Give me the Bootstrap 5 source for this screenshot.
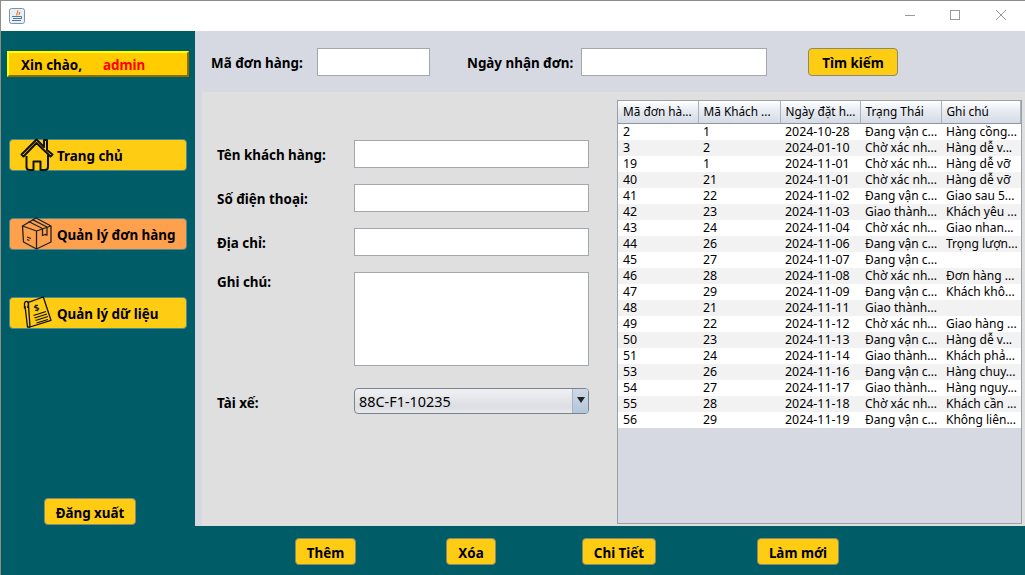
<!DOCTYPE html>
<html lang="vi">
<head>
<meta charset="UTF-8">
<title>Quản lý đơn hàng</title>
<link href="https://cdn.jsdelivr.net/npm/bootstrap@5.3.0/dist/css/bootstrap.min.css" rel="stylesheet">
<style>
  html, body { height: 100%; overflow: hidden; }
  body { background: #8d8d8d; font-family: "Noto Sans", sans-serif; font-size: 12px; color: #000; }
  .win-frame { width: 1024px; height: 574px; margin: 1px 0 0 1px; display: flex; flex-direction: column; background: #005c66; }
  .win-title { height: 30px; background: #fff; flex: none; padding: 0 8px; }
  .win-ctrl { width: 46px; }
  .win-ctrls { margin: -2px -7px 0 auto; }
  .win-body { height: 495px; flex: none; }
  .side-col { width: 194px; flex: none; padding: 20px 6px 1px 6px; }
  .hello-box { height: 26px; background: #ffcc00; border: 2px solid; border-color: #ffff00 #8a7000 #8a7000 #ffff00; padding: 2px 0 0 12px; font: bold 13.4px "Noto Sans", sans-serif; }
  .hello-name { color: #f00; margin-left: 21px; }
  .menu-stack { margin-top: 62px; padding: 0 2px; gap: 47px; }
  .menu-btn { height: 32px; background: #ffcc14; border: 1px solid #4e8a8f; border-radius: 4px; font: bold 13.4px "Noto Sans", sans-serif; padding: 2px 0 0 47px; position: relative; color: #000; }
  .menu-btn.is-active { background: #ffa04d; }
  .menu-ico { position: absolute; left: 10px; top: -2px; width: 34px; height: 36px; }
  .yellow-btn { background: #ffcc14; border: 1px solid #8b8a70; border-radius: 4px; font: bold 13.4px "Noto Sans", sans-serif; height: 27px; padding: 2px 0 0; color: #000; }
  .main-col { background: #d6d9e1; }
  .search-row { height: 61px; flex: none; padding: 17px 0 0 16px; }
  .bold-label { font: bold 13.4px "Noto Sans", sans-serif; }
  .flat-input { background: #fff; border: 1px solid #a3a8ae; display: block; }
  .search-label { line-height: 28px; height: 28px; padding-top: 1px; }
  .input-code { width: 113px; height: 28px; }
  .input-date { width: 186px; height: 28px; }
  .btn-search { width: 90px; height: 28px; margin-left: 41px; }
  .btn-logout { width: 92px; margin-left: 37px; }
  .work-area { margin-left: 7px; background: #dfdfdf; flex: 1; min-height: 0; padding: 8px 3px 3px 15px; }
  .form-col { width: 372px; flex: none; padding-top: 40px; }
  .form-line { display: flex; margin-bottom: 16px; }
  .form-line .bold-label { width: 137px; line-height: 28px; height: 28px; padding-top: 1px; flex: none; }
  .form-line .note-label { line-height: 18px; height: 18px; }
  .form-line .driver-label { line-height: 40px; height: 40px; }
  .field-input { width: 235px; height: 28px; }
  .field-note { width: 235px; height: 94px; resize: none; }
  .combo-box { width: 235px; height: 26px; margin-top: 6px; border: 1px solid #7a8490; border-radius: 4px; background: linear-gradient(#f0f1f3, #dcdee3 75%, #e8eaee); font-size: 14.4px; padding-left: 4px; line-height: 26px; position: relative; }
  .combo-arrow { position: absolute; right: 0; top: 0; bottom: 0; width: 16px; background: linear-gradient(#cfd9e4, #b3c6da); border-left: 1px solid #a9b4c0; border-radius: 0 3px 3px 0; }
  .combo-arrow::after { content: ""; position: absolute; left: 4px; top: 8px; border: 4px solid transparent; border-top: 6px solid #222; border-bottom: 0; }
  .table-box { margin-left: 28px; width: 405px; background: #d6d9e1; border: 1px solid #9aa0a6; height: 424px; overflow: hidden; }
  .order-table { table-layout: fixed; width: 403px; margin: 0; border-collapse: collapse; }
  .order-table th, .order-table td { padding: 0 0 0 5px; font-weight: 400; white-space: nowrap; overflow: hidden; border: 0; color: #000; font-size: 12px; }
  .order-table th { height: 22px; font-size: 11.8px; background: linear-gradient(#fff, #e9edf3 40%, #d5dae4); border-right: 1px solid #a9b1bd; border-bottom: 1px solid #8b95a3; }
  .order-table th:nth-child(1) { width: 80px; }
  .order-table th:nth-child(2) { width: 82px; }
  .order-table th:nth-child(3) { width: 80px; }
  .order-table th:nth-child(4) { width: 81px; }
  .order-table td { height: 16px; line-height: 16px; background: #fff; }
  .order-table td:nth-child(-n+3) { font-size: 12.4px; }
  .order-table tbody tr:nth-child(even) td { background: #f2f2f2; }
  .action-bar { height: 48px; flex: none; padding: 12px 0 0 294px; }
  .btn-them { width: 61px; margin-right: 90px; }
  .btn-xoa { width: 50px; margin-right: 86px; }
  .btn-chitiet { width: 74px; margin-right: 101px; }
  .btn-lammoi { width: 82px; }
</style>
</head>
<body>
<div class="win-frame">
  <div class="win-title d-flex align-items-center">
    <svg width="16" height="16" viewBox="0 0 16 16"><rect x=".5" y=".5" width="15" height="15" rx="2" fill="#e8eff6" stroke="#7d92a8"/><path d="M8.5 2.5c1.5 2-2 3-.5 5M10.500 4c.8 1-1 2-.2 3" fill="none" stroke="#e2762a" stroke-width="1.2"/><path d="M3 8.500h7M4 10.500h6M3 12.500h9M10 8.500h2.500v2H10" fill="none" stroke="#4f7aa6"/></svg>
    <div class="win-ctrls d-flex align-items-center">
      <div class="win-ctrl d-flex justify-content-center"><svg width="12" height="12"><path d="M2 6.500h10" stroke="#999"/></svg></div>
      <div class="win-ctrl d-flex justify-content-center"><svg width="12" height="12"><rect x="1.500" y="1.500" width="9" height="9" fill="none" stroke="#999"/></svg></div>
      <div class="win-ctrl d-flex justify-content-center"><svg width="12" height="12"><path d="M1 1l10 10M11 1L1 11" stroke="#999"/></svg></div>
    </div>
  </div>
  <div class="win-body d-flex">
    <div class="side-col d-flex flex-column">
      <div class="hello-box d-flex align-items-center"><span>Xin chào,</span><span class="hello-name">admin</span></div>
      <div class="menu-stack d-flex flex-column">
        <button class="menu-btn text-start">Trang chủ
          <svg class="menu-ico" viewBox="0 0 34 36" fill="none" stroke="#111" stroke-width="2" stroke-linejoin="round"><path d="M1.500 16.500L16.500 1.500L24 9V2H27V12L32.500 16.500L30.500 18.500L16.500 5L3.500 18.500Z"/><path d="M6.500 18V29Q6.500 32 9.500 32H13.500V23.500H20.500V32H25Q28 32 28 29V17"/></svg></button>
        <button class="menu-btn is-active text-start">Quản lý đơn hàng
          <svg class="menu-ico" viewBox="0 0 34 36" fill="none" stroke="#222" stroke-width="1.300" stroke-linejoin="round"><path d="M16 1L31 9V25L16.500 32L3.500 25L2.500 9Z"/><path d="M2.500 9L16.500 14L31 9M16.500 14V32"/><path d="M8.500 4.500L22.500 11.500M12.500 2.700L27 10M22.500 11.500V18.500L25 17.500L27 18V10"/><path d="M7 20L11 21.500M7 22.500L9.500 23.500"/></svg></button>
        <button class="menu-btn text-start">Quản lý dữ liệu
          <svg class="menu-ico" viewBox="0 0 34 36" fill="none" stroke="#111" stroke-width="1.300" stroke-linejoin="round"><path d="M8.300 6.300L23.300 1L31 24.300L10 31Z"/><path d="M5 10L7.500 31L10 31"/><path d="M4.500 12.500V7.500Q5 5 7 5.500Q9 6 8.500 8.500L7.500 12"/><path d="M13.500 19.500L26 15.500M14.500 22L27 18M15.500 24.500L28 20.500M16.500 27L28 23.500"/><text x="14" y="15" font-family="Noto Sans, sans-serif" font-size="9" font-weight="700" fill="#111" stroke="none" transform="rotate(-17 17 12)">$</text></svg></button>
      </div>
      <button class="yellow-btn btn-logout mt-auto align-self-start">Đăng xuất</button>
    </div>
    <div class="main-col flex-grow-1 d-flex flex-column">
      <div class="search-row d-flex">
        <label class="bold-label search-label" style="width:106px">Mã đơn hàng:</label>
        <input class="flat-input input-code">
        <label class="bold-label search-label" style="margin-left:37px;width:114px">Ngày nhận đơn:</label>
        <input class="flat-input input-date">
        <button class="yellow-btn btn-search">Tìm kiếm</button>
      </div>
      <div class="work-area d-flex">
        <div class="form-col">
          <div class="form-line"><label class="bold-label">Tên khách hàng:</label><input class="flat-input field-input"></div>
          <div class="form-line"><label class="bold-label">Số điện thoại:</label><input class="flat-input field-input"></div>
          <div class="form-line"><label class="bold-label">Địa chỉ:</label><input class="flat-input field-input"></div>
          <div class="form-line"><label class="bold-label note-label">Ghi chú:</label><textarea class="flat-input field-note"></textarea></div>
          <div class="form-line"><label class="bold-label driver-label">Tài xế:</label><div class="combo-box">88C-F1-10235<span class="combo-arrow"></span></div></div>
        </div>
        <div class="table-box">
          <table class="order-table">
            <thead><tr><th>Mã đơn hà...</th><th>Mã Khách ...</th><th>Ngày đặt h...</th><th>Trạng Thái</th><th>Ghi chú</th></tr></thead>
            <tbody id="orderRows"></tbody>
          </table>
        </div>
      </div>
    </div>
  </div>
  <div class="action-bar d-flex align-items-start">
    <button class="yellow-btn btn-them">Thêm</button>
    <button class="yellow-btn btn-xoa">Xóa</button>
    <button class="yellow-btn btn-chitiet">Chi Tiết</button>
    <button class="yellow-btn btn-lammoi">Làm mới</button>
  </div>
</div>
<script>
  const rows = [
    ['2','1','2024-10-28','Đang vận c...','Hàng cồng...'],
    ['3','2','2024-01-10','Chờ xác nh...','Hàng dễ v...'],
    ['19','1','2024-11-01','Chờ xác nh...','Hàng dễ vỡ'],
    ['40','21','2024-11-01','Chờ xác nh...','Hàng dễ vỡ'],
    ['41','22','2024-11-02','Đang vận c...','Giao sau 5...'],
    ['42','23','2024-11-03','Giao thành...','Khách yêu ...'],
    ['43','24','2024-11-04','Chờ xác nh...','Giao nhan...'],
    ['44','26','2024-11-06','Đang vận c...','Trọng lượn...'],
    ['45','27','2024-11-07','Đang vận c...',''],
    ['46','28','2024-11-08','Chờ xác nh...','Đơn hàng ...'],
    ['47','29','2024-11-09','Đang vận c...','Khách khô...'],
    ['48','21','2024-11-11','Giao thành...',''],
    ['49','22','2024-11-12','Chờ xác nh...','Giao hàng ...'],
    ['50','23','2024-11-13','Đang vận c...','Hàng dễ v...'],
    ['51','24','2024-11-14','Giao thành...','Khách phả...'],
    ['53','26','2024-11-16','Đang vận c...','Hàng chuy...'],
    ['54','27','2024-11-17','Giao thành...','Hàng nguy...'],
    ['55','28','2024-11-18','Chờ xác nh...','Khách cần ...'],
    ['56','29','2024-11-19','Đang vận c...','Không liên...']
  ];
  document.getElementById('orderRows').innerHTML = rows.map(r => '<tr>' + r.map(c => '<td>' + c + '</td>').join('') + '</tr>').join('');
</script>
</body>
</html>
